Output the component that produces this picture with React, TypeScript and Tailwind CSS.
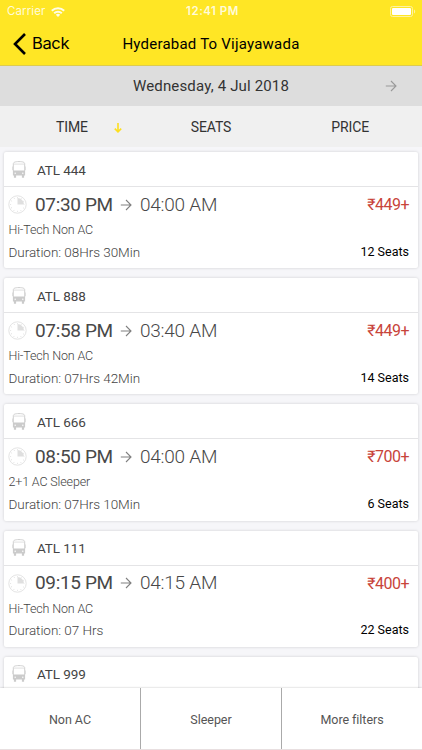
import { memo } from "react";

interface IBus {
  id: string;
  departure: string;
  arrival: string;
  type: string;
  duration: string;
  price: string;
  seats: string;
}

const buses: IBus[] = [
  { id: "ATL 444", departure: "07:30 PM", arrival: "04:00 AM", type: "Hi-Tech Non AC", duration: "08Hrs 30Min", price: "₹449+", seats: "12 Seats" },
  { id: "ATL 888", departure: "07:58 PM", arrival: "03:40 AM", type: "Hi-Tech Non AC", duration: "07Hrs 42Min", price: "₹449+", seats: "14 Seats" },
  { id: "ATL 666", departure: "08:50 PM", arrival: "04:00 AM", type: "2+1 AC Sleeper", duration: "07Hrs 10Min", price: "₹700+", seats: "6 Seats" },
  { id: "ATL 111", departure: "09:15 PM", arrival: "04:15 AM", type: "Hi-Tech Non AC", duration: "07 Hrs", price: "₹400+", seats: "22 Seats" },
];

const nextBusId = "ATL 999";

const ArrowRight: React.FC<{ className?: string }> = ({ className }) => (
  <svg viewBox="0 0 12 12" fill="none" stroke="currentColor" strokeWidth="1.1" className={className}>
    <path d="M0.8 6H11M6 1L11 6L6 11" />
  </svg>
);

const BusIcon = () => (
  <svg viewBox="0 0 14 17" className="w-3.5 h-[17px] shrink-0">
    <path d="M1.3 10V3C1.3 1.2 3 .6 7 .6s5.7.6 5.7 2.4v7" fill="none" stroke="#cfcfcf" strokeWidth="1" />
    <path d="M2 3.1h10" stroke="#dcdcdc" strokeWidth=".9" />
    <path d="M0 5.5h.9v3.5H0zM13.1 5.5h.9v3.5h-.9z" fill="#dcdcdc" />
    <path d="M.9 9.4H13.1V14.4H.9zM1.9 14h2.2v2.7H1.9zM9.9 14h2.2v2.7H9.9z" fill="#cbcbcb" />
    <circle cx="3.2" cy="12.3" r=".7" fill="#fff" />
    <circle cx="10.8" cy="12.3" r=".7" fill="#fff" />
  </svg>
);

const ClockIcon = () => (
  <svg viewBox="0 0 19 19" className="w-[19px] h-[19px] shrink-0">
    <circle cx="9.5" cy="9.5" r="8.7" fill="#fff" stroke="#e0e0e0" strokeWidth=".9" />
    <circle cx="9.5" cy="9.5" r="6.9" fill="none" stroke="#d8d8d8" strokeWidth="1.1" strokeDasharray=".6 3.01" strokeDashoffset=".3" />
    <path d="M9.5 9.5V3a6.5 6.5 0 0 1 6.5 6.5z" fill="#dfdfdf" />
  </svg>
);

const BusCardHeader: React.FC<{ id: string }> = ({ id }) => (
  <div className="h-[35px] flex items-center pl-2 border-b border-[#e4e4e6]">
    <BusIcon />
    <p className="ml-[11px] text-[13.5px] leading-5 tracking-[-0.1px] text-[#444] pt-px">{id}</p>
  </div>
);

const BusCard: React.FC<{ bus: IBus }> = memo(({ bus }) => (
  <div className="h-[116.2px] shrink-0 bg-white rounded-xs shadow-[0_0_3px_rgba(0,0,0,0.17)]">
    <BusCardHeader id={bus.id} />
    <div className="h-[34px] flex items-center pl-1 pr-[9px] pt-px">
      <ClockIcon />
      <p className="ml-2 w-[78px] pt-px text-[19px] tracking-[-0.35px] text-[#484848] whitespace-nowrap">{bus.departure}</p>
      <ArrowRight className="w-3 h-3 ml-[7px] shrink-0 text-[#808080]" />
      <p className="ml-2 pt-px text-[19px] tracking-[-0.25px] font-light text-[#484848]">{bus.arrival}</p>
      <p className="ml-auto pt-px text-[16px] tracking-[-0.5px] text-[#c8443a]">{bus.price}</p>
    </div>
    <p className="h-[18px] pl-[4.5px] text-[12.5px] leading-[18px] tracking-[-0.15px] font-light text-[#444]">{bus.type}</p>
    <div className="h-[26px] flex items-center pl-[4.5px] pr-[9px]">
      <p className="text-[13.5px] tracking-[-0.05px] font-light text-[#444]">Duration: {bus.duration}</p>
      <p className="ml-auto text-[12.5px] text-black">{bus.seats}</p>
    </div>
  </div>
));

const App: React.FC = () => {
  return (
    <div className="w-[422px] h-[750px] overflow-hidden flex flex-col bg-[#f6f6f9] font-[Roboto,sans-serif]">
      <header className="h-[66px] shrink-0 bg-[#ffe625] border-b border-[#dccb50]">
        <div className="h-[22px] grid grid-cols-3 items-center px-[7px] font-[Inter,sans-serif] text-[11.5px] text-[#fffbd8]">
          <div className="flex items-center gap-[6px] pt-[2px]">
            <span className="tracking-[0.1px]">Carrier</span>
            <svg viewBox="0 0 14 10" className="w-3.5 h-2.5" fill="none" stroke="#fffde8" strokeWidth="2">
              <path d="M.8 3.8a8.8 8.8 0 0 1 12.4 0M3.2 6.3a5.4 5.4 0 0 1 7.6 0" />
              <path d="M7 10L4.8 7.8a3.1 3.1 0 0 1 4.4 0z" fill="#fffde8" stroke="none" />
            </svg>
          </div>
          <span className="text-center font-semibold tracking-[0.5px] pt-[2px] pl-[3px]">12:41 PM</span>
          <svg viewBox="0 0 26 11" className="w-[26px] h-[11px] ml-auto -mr-px">
            <rect x=".5" y=".5" width="22" height="10" rx="2" fill="none" stroke="#fff3a0" />
            <rect x="2" y="2" width="19" height="7" rx="1" fill="#fff" />
            <path d="M24 3.5c1.6.6 1.6 3.4 0 4z" fill="#fff3a0" />
          </svg>
        </div>
        <div className="h-[43px] grid grid-cols-[1fr_auto_1fr] items-center">
          <div className="flex items-center pl-[13px]">
            <svg viewBox="0 0 13 22" className="w-[13px] h-[22px]" fill="none" stroke="#000" strokeWidth="2.6">
              <path d="M12 1L2 11L12 21" />
            </svg>
            <span className="ml-[6px] text-[16.5px] tracking-[-0.35px] font-[Inter,sans-serif]">Back</span>
          </div>
          <h1 className="pt-[2px] text-[15px] tracking-[0.22px] text-black">Hyderabad To Vijayawada</h1>
        </div>
      </header>

      <div className="h-10 shrink-0 grid grid-cols-[1fr_auto_1fr] items-center bg-[#dddddd]">
        <p className="col-start-2 pt-px text-[15px] tracking-[0.16px] text-[#333]">Wednesday, 4 Jul 2018</p>
        <ArrowRight className="w-3 h-3 ml-auto mr-[25px] text-[#999]" />
      </div>

      <div className="h-[41px] shrink-0 grid grid-cols-3 items-center bg-[#f0f0f0] pt-[2px] text-[14px] tracking-[-0.1px] text-[#333]">
        <div className="flex items-center pl-14">
          <span>TIME</span>
          <svg viewBox="0 0 8 10" className="w-2 h-2.5 ml-[26.5px]" fill="none" stroke="#fddf20" strokeWidth="1.6">
            <path d="M4 0V9M.8 5.6L4 8.8L7.2 5.6" />
          </svg>
        </div>
        <span className="text-center">SEATS</span>
        <span className="text-center pr-[3px]">PRICE</span>
      </div>

      <main className="flex-1 min-h-0 overflow-hidden flex flex-col gap-2.5 px-1 pt-[5px]">
        {buses.map((bus) => <BusCard key={bus.id} bus={bus} />)}
        <div className="shrink-0 bg-white rounded-t-xs shadow-[0_0_3px_rgba(0,0,0,0.17)]">
          <BusCardHeader id={nextBusId} />
        </div>
      </main>

      <footer className="h-[62px] shrink-0 relative grid grid-cols-[141px_141px_140px] bg-white divide-x divide-[#aaa] shadow-[0_0_2px_rgba(0,0,0,0.25)] border-b border-[#e8dfe0] text-[12.5px] tracking-[-0.05px] text-[#555]">
        <div className="flex items-center justify-center pt-[3px]">Non AC</div>
        <div className="flex items-center justify-center pt-[3px]">Sleeper</div>
        <div className="flex items-center justify-center pt-[3px]">More filters</div>
      </footer>
    </div>
  );
};

export default App;
